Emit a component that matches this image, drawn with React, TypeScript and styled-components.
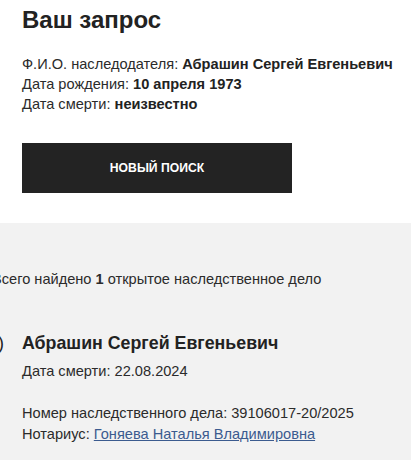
import React from "react";
import styled, { createGlobalStyle } from "styled-components";

const GlobalStyle = createGlobalStyle`
  html, body {
    margin: 0;
    padding: 0;
    background: #ffffff;
    overflow: hidden;
  }
  body {
    font-family: "Liberation Sans", Arial, sans-serif;
    color: #222222;
  }
`;

const Page = styled.div`
  width: 411px;
  height: 460px;
  overflow: hidden;
  display: flex;
  flex-direction: column;
`;

const Request = styled.section`
  padding: 6px 22px 30px;
  background: #ffffff;
`;

const Title = styled.h1`
  margin: 0;
  font-size: 24px;
  line-height: 28px;
  font-weight: 700;
`;

const Details = styled.div`
  margin-top: 20px;
  display: flex;
  flex-direction: column;
`;

const Detail = styled.div`
  font-size: 14.6px;
  line-height: 20px;
  white-space: nowrap;
  color: #2b2b2b;
  b {
    font-weight: 700;
    color: #222222;
  }
`;

const SearchButton = styled.button`
  margin-top: 29px;
  width: 270px;
  height: 50px;
  border: 0;
  background: #232323;
  color: #ffffff;
  font-family: inherit;
  font-size: 12.2px;
  font-weight: 700;
  text-transform: uppercase;
  cursor: pointer;
`;

const Results = styled.section`
  flex: 1;
  background: #f2f2f2;
  padding: 46px 22px 0;
`;

const Summary = styled.p`
  margin: 0 0 0 -30px;
  font-size: 14.6px;
  line-height: 20px;
  white-space: nowrap;
  color: #2b2b2b;
`;

const CaseList = styled.ol`
  margin: 42px 0 0;
  padding: 0;
  list-style: none;
`;

const CaseItem = styled.li`
  position: relative;
`;

const CaseNumber = styled.span`
  position: absolute;
  left: -34px;
  top: 0;
  font-size: 18px;
  line-height: 24px;
  font-weight: 400;
`;

const CaseName = styled.div`
  font-size: 17.8px;
  line-height: 24px;
  font-weight: 700;
`;

const CaseLine = styled.div<{ $gap?: number }>`
  margin-top: ${(p) => p.$gap ?? 0}px;
  font-size: 14.6px;
  line-height: 21px;
  white-space: nowrap;
  color: #2b2b2b;
`;

const NotaryLink = styled.a`
  color: #3b5b8f;
  text-decoration: underline;
`;

export default function App() {
  return (
    <Page>
      <GlobalStyle />
      <Request>
        <Title>Ваш запрос</Title>
        <Details>
          <Detail>
            Ф.И.О. наследодателя: <b>Абрашин Сергей Евгеньевич</b>
          </Detail>
          <Detail>
            Дата рождения: <b>10 апреля 1973</b>
          </Detail>
          <Detail>
            Дата смерти: <b>неизвестно</b>
          </Detail>
        </Details>
        <SearchButton type="button">Новый поиск</SearchButton>
      </Request>
      <Results>
        <Summary>
          Всего найдено <b>1</b> открытое наследственное дело
        </Summary>
        <CaseList>
          <CaseItem>
            <CaseNumber>1)</CaseNumber>
            <CaseName>Абрашин Сергей Евгеньевич</CaseName>
            <CaseLine $gap={6}>Дата смерти: 22.08.2024</CaseLine>
            <CaseLine $gap={21}>Номер наследственного дела: 39106017-20/2025</CaseLine>
            <CaseLine>
              Нотариус: <NotaryLink href="#">Гоняева Наталья Владимировна</NotaryLink>
            </CaseLine>
          </CaseItem>
        </CaseList>
      </Results>
    </Page>
  );
}
